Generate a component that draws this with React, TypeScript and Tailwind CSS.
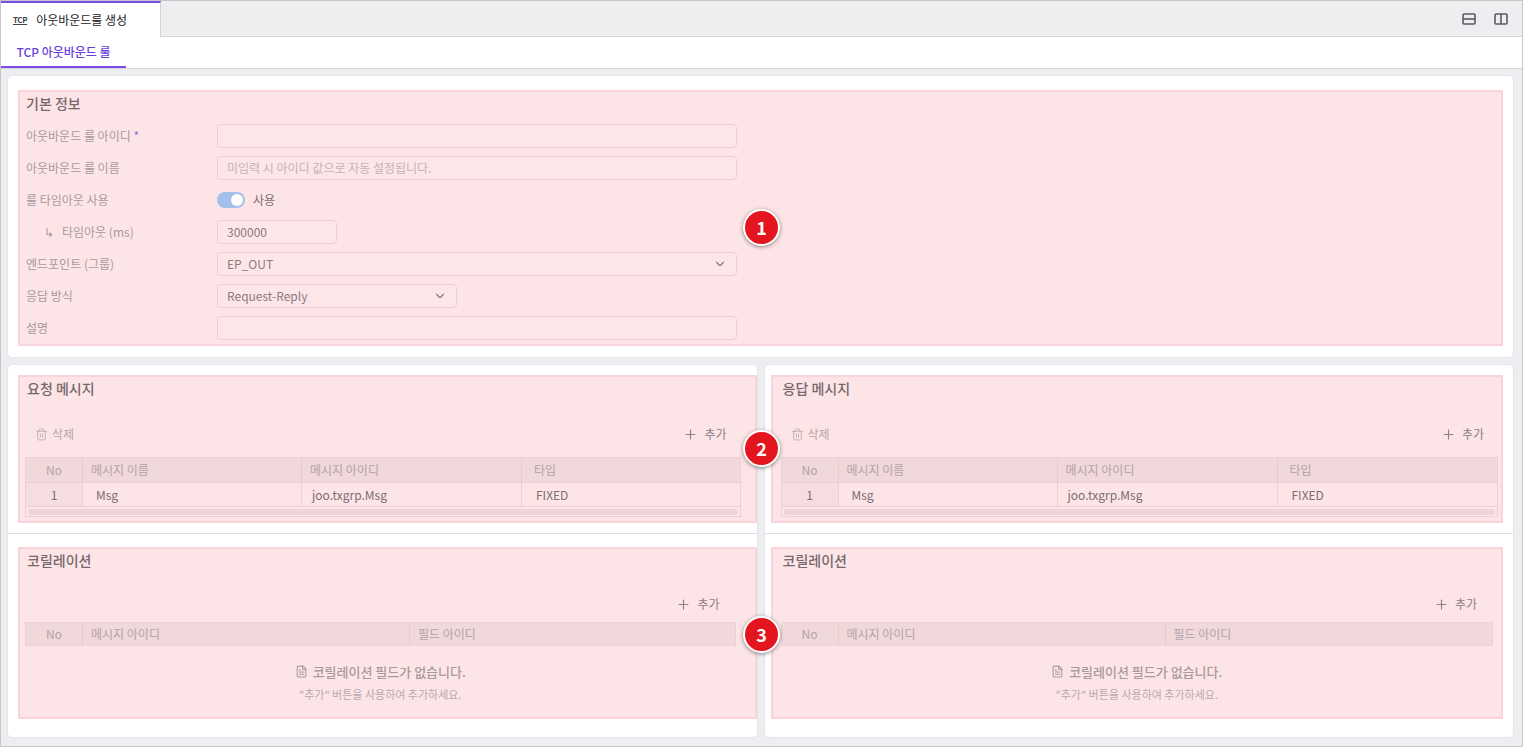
import { Trash2, Plus, ChevronDown, FileText } from "lucide-react";

const font = { fontFamily: '"Noto Sans CJK KR", "Noto Sans", sans-serif' };

function Badge({ n, top }: { n: number; top: number }) {
  return (
    <div
      className="absolute left-[742px] w-[37px] h-[37px] rounded-full bg-[#e3161f] border-[2px] border-white shadow-[0_1px_4px_rgba(0,0,0,0.45)] flex items-center justify-center text-white text-[18px] font-bold"
      style={{ top }}
    >
      {n}
    </div>
  );
}

function Row({ label, children, indent }: { label: React.ReactNode; children: React.ReactNode; indent?: boolean }) {
  return (
    <div className="flex items-center h-[32px]">
      <div className={`w-[191px] text-[12px] text-[#a8999d] ${indent ? "pl-[18px]" : ""}`}>{label}</div>
      {children}
    </div>
  );
}

const inputCls = "h-[24px] rounded-[4px] border border-[#ecced3] bg-[#fde6e8] px-[9px] flex items-center text-[12px] text-[#8a7c80]";

function MessagePanel({ title, right }: { title: string; right?: boolean }) {
  return (
    <div className={`mt-[10px] h-[148px] bg-[#fde5e7] border-[2px] border-[#fbd3db] ${right ? "ml-[6px] mr-[10px] pl-[8px] pr-[3px]" : "ml-[10px] pl-[5px] pr-[14px]"} pt-[0px]`}>
      <div className="h-[22px] flex items-center pl-[2px] text-[14px] font-medium text-[#76686c]">{title}</div>
      <div className="h-[46px] mt-[12px] flex items-center justify-between pl-[10px] pr-[14px] text-[12px] text-[#b5a6aa]">
        <span className="flex items-center gap-[4px]"><Trash2 size={13} strokeWidth={1.5} /> 삭제</span>
        <span className="flex items-center gap-[6px] text-[#8e8084]"><Plus size={15} strokeWidth={1.8} /> 추가</span>
      </div>
      <div className="border border-[#ecd0d4] text-[12px]">
        <div className="grid grid-cols-[57px_219px_220px_1fr] h-[24px] bg-[#f0d8db] text-[#b3a3a7]">
          <div className="flex items-center justify-center border-r border-[#e7cbcf]">No</div>
          <div className="flex items-center pl-[8px] border-r border-[#e7cbcf]">메시지 이름</div>
          <div className="flex items-center pl-[8px] border-r border-[#e7cbcf]">메시지 아이디</div>
          <div className="flex items-center pl-[12px]">타입</div>
        </div>
        <div className="grid grid-cols-[57px_219px_220px_1fr] h-[24px] text-[#7c6e72] border-t border-[#ecd0d4]">
          <div className="flex items-center justify-center bg-[#f5dde0] border-r border-[#ecd0d4]">1</div>
          <div className="flex items-center pl-[13px] border-r border-[#ecd0d4]">Msg</div>
          <div className="flex items-center pl-[10px] border-r border-[#ecd0d4]">joo.txgrp.Msg</div>
          <div className="flex items-center pl-[14px]">FIXED</div>
        </div>
        <div className="h-[10px] border-t border-[#ecd0d4] px-[2px] flex items-center">
          <div className="h-[6px] w-full rounded-full bg-[#eed5d8]" />
        </div>
      </div>
    </div>
  );
}

function CorrPanel({ right }: { right?: boolean }) {
  return (
    <div className={`mt-[13px] h-[172px] bg-[#fde5e7] border-[2px] border-[#fbd3db] ${right ? "ml-[6px] mr-[10px] pl-[8px] pr-[8px]" : "ml-[10px] pl-[5px] pr-[19px]"} pt-[0px]`}>
      <div className="h-[22px] flex items-center pl-[2px] text-[14px] font-medium text-[#76686c]">코릴레이션</div>
      <div className="h-[36px] mt-[15px] flex items-center justify-end pr-[16px] text-[12px] text-[#8e8084]">
        <span className="flex items-center gap-[6px]"><Plus size={15} strokeWidth={1.8} /> 추가</span>
      </div>
      <div className="grid grid-cols-[57px_327px_1fr] h-[24px] bg-[#f0d8db] border border-[#ecd0d4] text-[12px] text-[#b3a3a7]">
        <div className="flex items-center justify-center border-r border-[#e7cbcf]">No</div>
        <div className="flex items-center pl-[8px] border-r border-[#e7cbcf]">메시지 아이디</div>
        <div className="flex items-center pl-[8px]">필드 아이디</div>
      </div>
      <div className="flex flex-col items-center mt-[16px]">
        <div className="flex items-center gap-[5px] text-[13px] font-medium text-[#a8999d]"><FileText size={13} /> 코릴레이션 필드가 없습니다.</div>
        <div className="mt-[4px] text-[11px] text-[#b8a9ad]">"추가" 버튼을 사용하여 추가하세요.</div>
      </div>
    </div>
  );
}

export default function App() {
  return (
    <div className="relative w-[1523px] h-[747px] border border-[#c6c6c6] bg-[#eceef1] flex flex-col overflow-hidden" style={font}>
      <div className="h-[36px] flex bg-[#eeeef0] border-b border-[#d3d4d8]">
        <div className="w-[160px] h-[36px] bg-white border-t-[2px] border-[#7b4ce8] border-r border-r-[#d3d4d8] flex items-center pl-[12px] gap-[9px] text-[12px] text-[#222]">
          <span className="text-[8px] font-bold leading-none underline tracking-tighter text-[#444]">TCP</span>
          아웃바운드룰 생성
        </div>
        <div className="flex-1" />
        <div className="flex items-center gap-[18px] pr-[14px] text-[#555b66]">
          <svg width="14" height="12" viewBox="0 0 14 12" fill="none" stroke="currentColor" strokeWidth="1.6"><rect x="1" y="1" width="12" height="10" rx="1" /><path d="M1 6h12" /></svg>
          <svg width="14" height="12" viewBox="0 0 14 12" fill="none" stroke="currentColor" strokeWidth="1.6"><rect x="1" y="1" width="12" height="10" rx="1" /><path d="M7 1v10" /></svg>
        </div>
      </div>
      <div className="h-[32px] bg-white border-b border-[#d3d4d8] flex">
        <div className="w-[125px] flex items-center justify-center text-[12px] font-medium text-[#6a3fe0] border-b-[2px] border-[#7b4ce8]">TCP 아웃바운드 룰</div>
      </div>
      <div className="flex-1 pt-[7px] pl-[7px] pr-[9px] pb-[9px] flex flex-col gap-[8px]">
        <div className="h-[281px] bg-white rounded-[4px] shadow-[0_0_2px_rgba(0,0,0,0.12)] pt-[14px] px-[10px]">
          <div className="h-[256px] bg-[#fde5e7] border-[2px] border-[#fbd3db] px-[6px] pt-[0px]">
            <div className="h-[22px] flex items-center text-[14px] font-medium text-[#76686c]">기본 정보</div>
            <div className="mt-[6px]">
              <Row label={<>아웃바운드 룰 아이디 <span className="text-[#8b6fe0]">*</span></>}><div className={`${inputCls} w-[520px]`} /></Row>
              <Row label="아웃바운드 룰 이름"><div className={`${inputCls} w-[520px] text-[#c3b3b7]`}>미입력 시 아이디 값으로 자동 설정됩니다.</div></Row>
              <Row label="룰 타임아웃 사용">
                <div className="flex items-center gap-[8px] text-[12px] text-[#7c6e72]">
                  <div className="w-[28px] h-[16px] rounded-full bg-[#a2c0eb] relative"><div className="absolute right-[2px] top-[2px] w-[12px] h-[12px] rounded-full bg-white" /></div>
                  사용
                </div>
              </Row>
              <Row label={<><span className="mr-[8px]">↳</span>타임아웃 (ms)</>} indent><div className={`${inputCls} w-[120px]`}>300000</div></Row>
              <Row label="엔드포인트 (그룹)"><div className={`${inputCls} w-[520px] justify-between`}>EP_OUT<ChevronDown size={14} /></div></Row>
              <Row label="응답 방식"><div className={`${inputCls} w-[240px] justify-between`}>Request-Reply<ChevronDown size={14} /></div></Row>
              <Row label="설명"><div className={`${inputCls} w-[520px]`} /></Row>
            </div>
          </div>
        </div>
        <div className="flex-1 flex gap-[8px]">
          {[false, true].map((r) => (
            <div key={String(r)} className="flex-1 bg-white rounded-[4px] shadow-[0_0_2px_rgba(0,0,0,0.12)] flex flex-col">
              <div className="h-[169px] border-b border-[#dcdde1]">
                <MessagePanel title={r ? "응답 메시지" : "요청 메시지"} right={r} />
              </div>
              <CorrPanel right={r} />
            </div>
          ))}
        </div>
      </div>
      <Badge n={1} top={208} />
      <Badge n={2} top={429} />
      <Badge n={3} top={615} />
    </div>
  );
}
